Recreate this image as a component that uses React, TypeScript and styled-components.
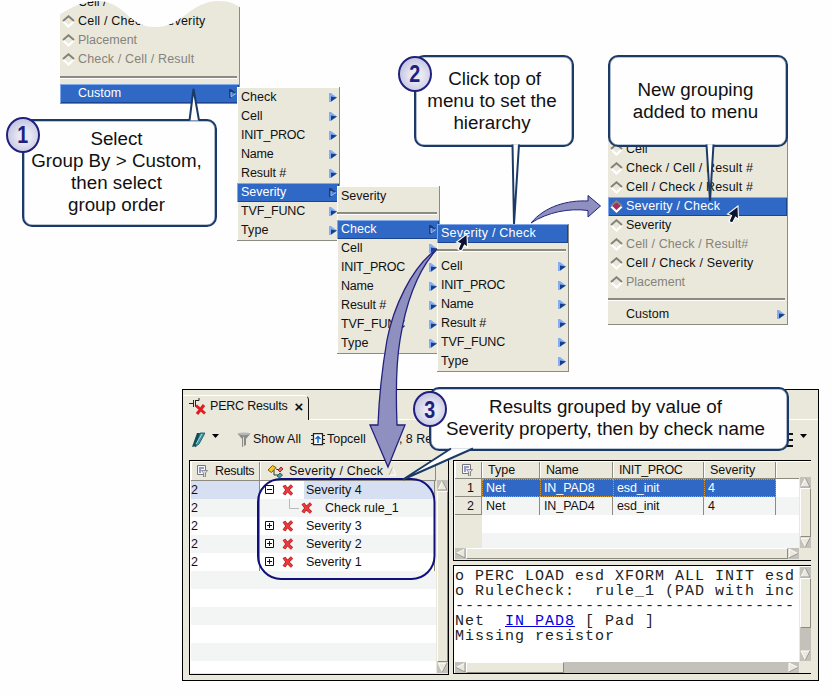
import React from "react";
import styled, { createGlobalStyle, css } from "styled-components";

const Global = createGlobalStyle`
  * { box-sizing: border-box; }
  html, body { margin: 0; background: #fefefe; overflow: hidden; }
`;

const BEIGE = "#eae8db";
const BLUE = "#2f68c5";

const Canvas = styled.main`
  position: relative;
  width: 831px;
  height: 696px;
  overflow: hidden;
  background: #fefefe;
  font: 12.5px/19px "Liberation Sans", Arial, sans-serif;
  color: #111;
  white-space: pre;
`;

/* ---------- menus ---------- */

const MenuBox = styled.ul<{ $x: number; $y: number; $w: number; $flat?: boolean }>`
  position: absolute;
  left: ${(p) => p.$x}px;
  top: ${(p) => p.$y}px;
  width: ${(p) => p.$w}px;
  margin: 0;
  padding: 0;
  list-style: none;
  background: ${BEIGE};
  border: solid #8d8a80;
  border-width: 0 1px 1px 0;
  box-shadow: ${(p) => (p.$flat ? "none" : "inset 1px 1px #fff")};
`;

const MenuRow = styled.li<{ $on?: boolean; $dim?: boolean; $indent: number; $ls: number }>`
  display: flex;
  align-items: center;
  height: 19px;
  padding: 0 2px 0 ${(p) => p.$indent}px;
  letter-spacing: ${(p) => p.$ls}px;
  color: ${(p) => (p.$on ? "#fff" : p.$dim ? "#85837c" : "#111")};
  ${(p) =>
    p.$on &&
    css`
      background: ${BLUE};
      box-shadow: inset 1px 1px #82a8ec, inset -1px -1px #1b458f;
    `}
`;

const MenuText = styled.span`
  flex: 1;
`;

const MenuGap = styled.li<{ $h: number; $line: number }>`
  height: ${(p) => p.$h}px;
  padding: ${(p) => p.$line}px 2px 0 0;
  &::before {
    content: "";
    display: block;
    height: 2px;
    background: #8d8a80;
    border-bottom: 1px solid #fff;
  }
`;

const Space = styled.li<{ $h: number }>`
  height: ${(p) => p.$h}px;
`;

const Diamond = styled.svg`
  width: 13px;
  height: 13px;
  margin: 0 3px 0 1px;
  flex: none;
`;

const Chevron = styled.svg`
  width: 8px;
  height: 9px;
  flex: none;
`;

const RadioMark = ({ on }: { on?: boolean }) => (
  <Diamond viewBox="0 0 13 13">
    {on && <path d="M6.5 2 11 6.5 6.5 11 2 6.5Z" fill="#a82c5e" />}
    <path d="M1.2 6.5 6.5 11.5 11.8 6.5" fill="none" stroke="#fff" strokeWidth="2.2" />
    <path d="M1 6 6.5 1.2 12 6" fill="none" stroke="#85827a" strokeWidth="1.9" />
  </Diamond>
);

const Sub = ({ on }: { on?: boolean }) => (
  <Chevron viewBox="0 0 8 9">
    {on ? (
      <>
        <path d="M0 0h2l5 4-5 5H0Z" fill="#193d7c" />
        <path d="M2 3v5l5-3.5" fill="#4f82d4" stroke="#9abbf5" />
      </>
    ) : (
      <>
        <path d="M0 0h2l6 4.5L2 9H0Z" fill="#86acf2" />
        <path d="M2 3.5 8 4.5 2 8.5Z" fill="#173f86" />
      </>
    )}
  </Chevron>
);

type Item = { t: string; on?: boolean; dim?: boolean; sub?: boolean; mark?: boolean; ls?: number };

const Row = ({ t, on, dim, sub, mark, ls = 0, indent = 4 }: Item & { indent?: number }) => (
  <MenuRow $on={on} $dim={dim} $indent={mark ? 1 : indent} $ls={ls}>
    {mark && <RadioMark on={on} />}
    <MenuText>{t}</MenuText>
    {sub && <Sub on={on} />}
  </MenuRow>
);

const f = (t: string, ls = 0, on = false): Item => ({ t, ls, on, sub: true });
const tail: Item[] = [f("Cell"), f("INIT_PROC", -0.3), f("Name", -0.2), f("Result #", -0.1), f("TVF_FUNC", -0.15), f("Type", 0.15)];

const Wave = styled.svg`
  position: absolute;
  left: 59px;
  top: 0;
  width: 182px;
  height: 30px;
`;

/* ---------- results window ---------- */

const Window = styled.section`
  position: absolute;
  left: 182px;
  top: 389px;
  width: 637px;
  height: 292px;
  display: flex;
  flex-direction: column;
  background: ${BEIGE};
  border: 1px solid #000;
`;

const TabBar = styled.div`
  display: flex;
  align-items: flex-end;
  height: 30px;
  flex: none;
`;

const Tab = styled.div`
  display: flex;
  align-items: center;
  width: 126px;
  height: 25px;
  padding: 0 0 3px 6px;
  border-top: 1px solid #fff;
  border-right: 1px solid #111;
  border-radius: 0 5px 0 0;
  letter-spacing: -0.2px;
  svg { margin-right: 4px; }
  b { margin-left: 7px; font-size: 15px; }
`;

const TabLine = styled.div`
  flex: 1;
  border-bottom: 1px solid #fff;
`;

const Toolbar = styled.div`
  display: flex;
  align-items: center;
  height: 39px;
  flex: none;
  padding: 0 10px 0 9px;
`;

const Tool = styled.div<{ $ml?: number; $gap?: number; $up?: boolean }>`
  display: flex;
  align-items: center;
  gap: ${(p) => p.$gap ?? 2}px;
  margin-left: ${(p) => p.$ml ?? 0}px;
  ${(p) => p.$up && "padding-bottom: 6px;"}
`;

const Grow = styled.div`
  flex: 1;
`;

const Panes = styled.div`
  display: flex;
  gap: 4px;
  padding: 1px 7px 0 6px;
`;

const Pane = styled.div<{ $w: number; $h: number }>`
  display: flex;
  width: ${(p) => p.$w}px;
  height: ${(p) => p.$h}px;
  border: 1px solid #000;
  box-shadow: inset 1px 1px #fff;
  background: ${BEIGE};
  padding: 1px 0 0 1px;
`;

const Stack = styled.div<{ $gap?: number; $w?: number }>`
  display: flex;
  flex-direction: column;
  gap: ${(p) => p.$gap ?? 0}px;
  width: ${(p) => (p.$w ? p.$w + "px" : "auto")};
  overflow: hidden;
`;

const Line = styled.div<{ $h: number; $bg?: string }>`
  display: flex;
  flex: none;
  height: ${(p) => p.$h}px;
  line-height: ${(p) => p.$h}px;
  background: ${(p) => p.$bg ?? "#fff"};
`;

const Head = styled.div<{ $w: number; $pl: number; $ls?: number; $gap?: number }>`
  display: flex;
  align-items: center;
  gap: ${(p) => p.$gap ?? 6}px;
  width: ${(p) => p.$w}px;
  flex: none;
  padding-left: ${(p) => p.$pl}px;
  background: ${BEIGE};
  border-right: 1px solid #8d8a80;
  border-bottom: 1px solid #8d8a80;
  box-shadow: inset 1px 0 #fff;
  letter-spacing: ${(p) => p.$ls ?? 0}px;
`;

const Cell = styled.div<{ $w: number; $pl?: number; $bg?: string; $edge?: boolean; $ls?: number }>`
  display: flex;
  align-items: center;
  width: ${(p) => p.$w}px;
  flex: none;
  padding-left: ${(p) => p.$pl ?? 1}px;
  background: ${(p) => p.$bg ?? "transparent"};
  border-right: ${(p) => (p.$edge ? "1px solid #8d8a80" : "0")};
  letter-spacing: ${(p) => p.$ls ?? 0}px;
`;

const Picked = styled(Cell)`
  background: ${BLUE};
  color: #fff;
  border: 1px dotted #d99a3c;
  border-right-width: ${(p) => (p.$edge ? 1 : 0)}px;
`;

const RowNumber = styled(Cell)`
  background: ${BEIGE};
  justify-content: flex-end;
  padding-right: 7px;
  border-bottom: 1px solid #8d8a80;
`;

const ScrollV = styled.div<{ $mt?: number; $mb?: number }>`
  display: flex;
  flex-direction: column;
  width: 11px;
  flex: none;
  margin: ${(p) => p.$mt ?? 0}px 0 ${(p) => p.$mb ?? 1}px 1px;
  background: #c3c1ba;
`;

const ScrollH = styled.div`
  display: flex;
  height: 11px;
  flex: none;
  background: #c3c1ba;
`;

const Thumb = styled.div<{ $len?: number }>`
  flex: ${(p) => (p.$len ? `0 0 ${p.$len}px` : "1")};
  background: ${BEIGE};
  border: 1px solid;
  border-color: #fff #8d8a80 #8d8a80 #fff;
`;

const ArrowSvg = styled.svg`
  width: 11px;
  height: 11px;
  flex: none;
`;

const shapes = {
  up: ["M5.5 1 10 10H1Z", "M5.5 1 10 10H1"],
  down: ["M1 1h9L5.5 10Z", "M10 1 5.5 10"],
  left: ["M1 5.5 10 1v9Z", "M1 5.5 10 10V1"],
  right: ["M10 5.5 1 1v9Z", "M10 5.5 1 10"],
};
const Knob = ({ d }: { d: keyof typeof shapes }) => (
  <ArrowSvg viewBox="0 0 11 11">
    <path d={shapes[d][0]} fill={BEIGE} stroke="#fff" />
    <path d={shapes[d][1]} fill="none" stroke="#8d8a80" />
  </ArrowSvg>
);

const Report = styled.pre`
  width: 344px;
  height: 95px;
  margin: 0;
  padding: 2px 0 0 0;
  overflow: hidden;
  background: #fff;
  font: 15px/15px "Liberation Mono", monospace;
  letter-spacing: 1px;
  color: #222;
  a { color: #0000e0; text-decoration: underline; }
`;

/* ---------- icons ---------- */

const RedX = () => (
  <svg width="12" height="12" viewBox="0 0 12 12">
    <path d="M2 1.5C4 5 7 8 10 10.5M10 1.5C7 4 4 7 2 10.5" stroke="#a81e22" strokeWidth="3.4" />
    <path d="M2 1.5C4 5 7 8 10 10.5M10 1.5C7 4 4 7 2 10.5" stroke="#ee3a3c" strokeWidth="2.1" />
  </svg>
);

const Expander = ({ open }: { open?: boolean }) => (
  <svg width="10" height="10" viewBox="0 0 10 10">
    <path d={"M.5 .5h8v8h-8ZM2 4.5h5" + (open ? "" : "M4.5 2v5")} fill="#fff" stroke="#111" />
  </svg>
);

const SheetIcon = () => (
  <svg width="12" height="12" viewBox="0 0 12 12">
    <path d="M1.5 .5h8v9h-8Z" fill="#f7f8fb" stroke="#77777b" />
    <path d="M3 3h5M3 5h2M3 7h2" stroke="#2a42a5" />
    <path d="M5.5 5.5h6L9.5 8v4h-2V8Z" fill="#dedede" stroke="#77777b" strokeWidth=".8" />
  </svg>
);

const TreeIcon = () => (
  <svg width="17" height="15" viewBox="0 0 17 15">
    <path d="M7 6v5h4M9 5l3 1" fill="none" stroke="#333" />
    <path d="M1 6 5.5 1.500 9 3.500 4.500 8.500Z" fill="#f4c52c" stroke="#7b5d08" />
    <path d="m11 6 3-3 2 2-3 3Z" fill="#ef6262" stroke="#a52222" />
    <path d="m10 12 3-3 2.500 2-3 3Z" fill="#45a698" stroke="#17685f" />
  </svg>
);

const PercIcon = () => (
  <svg width="17" height="17" viewBox="0 0 17 17">
    <path d="M0 5.5h4M4.5 2v7M6.5 2v7M7 2.5h3V0M7 8.5h3" fill="none" stroke="#222" />
    <path d="M7 7.5 16 15.500M15 7 8 16" stroke="#df1d21" strokeWidth="3" />
  </svg>
);

const PenIcon = () => (
  <svg width="13" height="16" viewBox="0 0 13 16">
    <path d="M5 1h3L4 14l-4 1Z" fill="#124d57" />
    <path d="M8 1h5L7 12l-4 3Z" fill="#3f98a2" stroke="#174e59" strokeWidth=".8" />
    <path d="M10 2 4 12" stroke="#9cdce0" />
  </svg>
);

const Funnel = () => (
  <svg width="14" height="15" viewBox="0 0 14 15">
    <path d="M.5 1.5h13L9 7v6l-4 2V7Z" fill="#8b8b89" />
    <ellipse cx="7" cy="1.8" rx="6" ry="1.4" fill="#b7b7b5" />
    <path d="M6.5 5v9" stroke="#ddd" />
  </svg>
);

const ChipIcon = () => (
  <svg width="14" height="13" viewBox="0 0 14 13">
    <path d="M0 2.5h14M0 6.5h14M0 10.5h14" stroke="#222" />
    <path d="M2.5 .7h9v11h-9Z" fill="#fff" stroke="#222" strokeWidth="1.3" />
    <path d="M7 10V3M4.5 6 7 3.5 9.5 6" fill="none" stroke="#1268d4" strokeWidth="1.5" />
  </svg>
);

const DropIcon = () => (
  <svg width="8" height="5" viewBox="0 0 8 5">
    <path d="M0 0h7L3.5 4Z" fill="#000" />
  </svg>
);

const SortIcon = () => (
  <svg width="9" height="9" viewBox="0 0 9 9">
    <path d="M4.500 .5 8 8H1Z" fill="none" stroke="#fff" />
    <path d="M4.500 .5 1 8" stroke="#aaa79d" />
  </svg>
);

/* ---------- results data ---------- */

const TreeRow = styled.div<{ $child?: boolean; $on?: boolean }>`
  display: flex;
  align-items: center;
  width: 175px;
  padding-left: ${(p) => (p.$child ? 28 : 5)}px;
  border-right: 1px solid #8d8a80;
  background: ${(p) => (p.$on ? "linear-gradient(90deg, #fff 44px, transparent 44px)" : "none")};
  > svg:first-child { margin-right: ${(p) => (p.$child ? 2 : 7)}px; }
  > span { margin-left: 12px; }
`;

const tree = [
  { t: "Severity 4", open: true },
  { t: "Check rule_1", child: true },
  { t: "Severity 3" },
  { t: "Severity 2" },
  { t: "Severity 1" },
];

const Tree = () => (
  <Pane $w={260} $h={215}>
    <Stack $w={245}>
      <Line $h={19} $bg={BEIGE}>
        <Head $w={69} $pl={5} $gap={7} $ls={-0.35}>
          <SheetIcon />
          Results
        </Head>
        <Head $w={176} $pl={7} $gap={5} $ls={0.2}>
          <TreeIcon />
          Severity / Check
          <SortIcon />
        </Head>
      </Line>
      {tree.map((r, i) => (
        <Line key={r.t} $h={18} $bg={i === 0 ? "#d6e0f2" : i % 2 ? "#f3f5f4" : "#fff"}>
          <Cell $w={69} $pl={0} $edge>
            2
          </Cell>
          <TreeRow $child={r.child} $on={r.open}>
            {r.child ? (
              <svg width="11" height="18" viewBox="0 0 11 18">
                <path d="M1.5 0v9.5H11" fill="none" stroke="#b9b9b9" />
              </svg>
            ) : (
              <Expander open={r.open} />
            )}
            <RedX />
            <span>{r.t}</span>
          </TreeRow>
        </Line>
      ))}
      {[0, 1, 2, 3, 4, 5].map((i) => (
        <Line key={i} $h={i === 5 ? 12 : 18} $bg={i % 2 ? "#fff" : "#f3f5f4"} />
      ))}
    </Stack>
    <ScrollV $mt={18}>
      <Knob d="up" />
      <Thumb />
      <Knob d="down" />
    </ScrollV>
  </Pane>
);

const Grid = () => (
  <Pane $w={359} $h={101}>
    <Stack $w={344}>
      <Line $h={17} $bg={BEIGE}>
        <Head $w={27} $pl={6}>
          <SheetIcon />
        </Head>
        <Head $w={58} $pl={6}>Type</Head>
        <Head $w={73} $pl={6} $ls={-0.2}>Name</Head>
        <Head $w={91} $pl={6} $ls={-0.35}>INIT_PROC</Head>
        <Head $w={72} $pl={6}>Severity</Head>
        <Head $w={24} $pl={0} />
      </Line>
      <Line $h={18}>
        <RowNumber $w={27} $edge>1</RowNumber>
        <Picked $w={58} $pl={3}>Net</Picked>
        <Picked $w={73} $pl={3} $ls={-0.1}>IN_PAD8</Picked>
        <Picked $w={91} $pl={3} $ls={-0.1}>esd_init</Picked>
        <Picked $w={72} $pl={3} $edge>4</Picked>
      </Line>
      <Line $h={18} $bg="#f3f5f4">
        <RowNumber $w={27} $edge>2</RowNumber>
        <Cell $w={58} $pl={4} $edge>Net</Cell>
        <Cell $w={73} $pl={4} $ls={-0.1} $edge>IN_PAD4</Cell>
        <Cell $w={91} $pl={4} $ls={-0.1} $edge>esd_init</Cell>
        <Cell $w={72} $pl={4} $edge>4</Cell>
      </Line>
      <Line $h={18}>
        <Cell $w={27} $bg={BEIGE} />
      </Line>
      <Line $h={15} $bg="#f3f5f4">
        <Cell $w={27} $bg={BEIGE} />
      </Line>
      <ScrollH>
        <Knob d="left" />
        <Thumb />
        <Knob d="right" />
      </ScrollH>
    </Stack>
    <ScrollV $mt={15} $mb={12}>
      <Knob d="up" />
      <Thumb />
      <Knob d="down" />
    </ScrollV>
  </Pane>
);

const Details = () => (
  <Pane $w={359} $h={109}>
    <Stack $w={344}>
      <Report>
        {"o PERC LOAD esd XFORM ALL INIT esd\no RuleCheck:  rule_1 (PAD with inc\n----------------------------------\nNet  "}
        <a>IN_PAD8</a>
        {" [ Pad ]\nMissing resistor"}
      </Report>
      <ScrollH>
        <Knob d="left" />
        <Thumb $len={98} />
        <Grow />
        <Knob d="right" />
      </ScrollH>
    </Stack>
    <ScrollV $mb={12}>
      <Knob d="up" />
      <Thumb $len={50} />
      <Grow />
      <Knob d="down" />
    </ScrollV>
  </Pane>
);

/* ---------- annotations ---------- */

const Bubble = styled.div<{ $x: number; $y: number; $w: number; $h: number; $pt: number; $pr?: number }>`
  position: absolute;
  left: ${(p) => p.$x}px;
  top: ${(p) => p.$y}px;
  width: ${(p) => p.$w}px;
  height: ${(p) => p.$h}px;
  padding: ${(p) => p.$pt}px ${(p) => p.$pr ?? 0}px 0 0;
  border: 2px solid #1b3a66;
  border-radius: 10px;
  background: #fefefe;
  font-size: 18.8px;
  line-height: 22px;
  text-align: center;
  box-shadow: inset 0 0 0 0.6px #7d90ad;
`;

const Badge = styled.div<{ $x: number; $y: number }>`
  position: absolute;
  left: ${(p) => p.$x}px;
  top: ${(p) => p.$y}px;
  width: 34px;
  height: 36px;
  display: flex;
  align-items: center;
  justify-content: center;
  border: 2px solid #20207e;
  border-radius: 50%;
  background: radial-gradient(circle at 55% 55%, #e8e8f3 25%, #c3c4e0 75%);
  color: #20207e;
  font-size: 24px;
  font-weight: bold;
  span { transform: scaleX(0.82); }
`;

const Overlay = styled.svg`
  position: absolute;
  inset: 0;
  width: 831px;
  height: 696px;
  pointer-events: none;
`;

const Cursor = ({ x, y }: { x: number; y: number }) => (
  <path
    transform={`translate(${x} ${y})`}
    d="M0 0-10.5 8-6.5 9.5-9 15.5-5.5 17-2.5 11 .5 13.5Z"
    fill="#0d1330"
    stroke="#fff"
    strokeWidth="1.1"
  />
);

export default function App() {
  return (
    <Canvas>
      <Global />

      <MenuBox $x={60} $y={-7} $w={180} $flat>
        <Row mark t="Cell / " />
        <Row mark t="Cell / Check / Severity" ls={0.2} />
        <Row mark dim t="Placement" />
        <Row mark dim t="Check / Cell / Result" ls={0.15} />
        <MenuGap $h={15} $line={7} />
        <Row on sub t="Custom" indent={18} />
      </MenuBox>
      <Wave viewBox="59 0 182 30">
        <path d="M59-1V15C72 7 83 1 97 1 126 1 127 27 155 27 183 27 190 1 219 1 230 1 235 4 241 8V-1Z" fill="#fefefe" />
      </Wave>

      <MenuBox $x={237} $y={87} $w={103}>
        <Space $h={1} />
        {[f("Check"), ...tail.slice(0, 4), f("Severity", 0, true), ...tail.slice(4)].map((r) => (
          <Row key={r.t} {...r} />
        ))}
      </MenuBox>

      <MenuBox $x={337} $y={186} $w={103}>
        <Space $h={1} />
        <Row t="Severity" />
        <MenuGap $h={14} $line={6} />
        <Row {...f("Check", 0, true)} />
        {tail.map((r) => (
          <Row key={r.t} {...r} />
        ))}
      </MenuBox>

      <Window>
        <TabBar>
          <Tab>
            <PercIcon />
            PERC Results<b>×</b>
          </Tab>
          <TabLine />
        </TabBar>
        <Toolbar>
          <Tool $gap={7}>
            <PenIcon />
            <Tool $up>
              <DropIcon />
            </Tool>
          </Tool>
          <Tool $ml={17}>
            <Funnel />
            Show All
          </Tool>
          <Tool $ml={10}>
            <ChipIcon />
            Topcell
          </Tool>
          <Tool $ml={33}>, 8 Results</Tool>
          <Grow />
          <svg width="20" height="16" viewBox="0 0 20 16">
            <path d="M0 2h20M0 8h20M0 14h20" stroke="#111" strokeWidth="2" />
          </svg>
          <Tool $ml={7} $up>
            <DropIcon />
          </Tool>
        </Toolbar>
        <Panes>
          <Tree />
          <Stack $gap={4}>
            <Grid />
            <Details />
          </Stack>
        </Panes>
      </Window>

      <MenuBox $x={437} $y={224} $w={132}>
        <Row on t="Severity / Check" ls={0.25} />
        <MenuGap $h={14} $line={6} />
        {tail.map((r) => (
          <Row key={r.t} {...r} />
        ))}
      </MenuBox>

      <MenuBox $x={608} $y={83} $w={180} $flat>
        <Space $h={57} />
        <Row mark t="Cell" />
        <Row mark t="Check / Cell / Result #" ls={0.15} />
        <Row mark t="Cell / Check / Result #" ls={0.15} />
        <Row mark on t="Severity / Check" ls={0.2} />
        <Row mark t="Severity" />
        <Row mark dim t="Cell / Check / Result#" ls={0.1} />
        <Row mark t="Cell / Check / Severity" ls={0.2} />
        <Row mark dim t="Placement" />
        <MenuGap $h={13} $line={6} />
        <Row sub t="Custom" indent={18} />
      </MenuBox>

      <Overlay viewBox="0 0 831 696">
        <rect x="258" y="479" width="176.5" height="100" rx="23" fill="none" stroke="#10107c" strokeWidth="2" />
        <Cursor x={467} y={234} />
        <Cursor x={738} y={206} />
        <g fill="#8f8fc0" stroke="#22227e" strokeWidth="1.3">
          <path d="M437 249C411 267 393 309 387 340 382 369 379 398 378 425H370L388 467 405 425H397C396 400 396 364 400 340 406 302 418 270 437 249Z" />
          <path d="M531 223C545 206 568 200 588 201V195.5L600.5 206 588 217V210.5C569 208 548 212 531 223Z" strokeWidth="1" />
        </g>
      </Overlay>

      <Bubble $x={21.5} $y={118.5} $w={195} $h={108} $pt={7} $pr={5}>
        {"Select\nGroup By > Custom,\nthen select\ngroup order"}
      </Bubble>
      <Bubble $x={414} $y={54.5} $w={160} $h={92} $pt={11} $pr={4}>
        {" Click top of\nmenu to set the\nhierarchy"}
      </Bubble>
      <Bubble $x={607.5} $y={54.5} $w={180} $h={92} $pt={22} $pr={4}>
        {"New grouping\nadded to menu"}
      </Bubble>
      <Bubble $x={428.5} $y={387} $w={360} $h={63.5} $pt={7} $pr={6}>
        {"Results grouped by value of\nSeverity property, then by check name"}
      </Bubble>

      <Overlay viewBox="0 0 831 696">
        <g fill="#fefefe" stroke="#1b3a66" strokeWidth="2">
          <path d="M189.5 120.5 193.5 89 199 120.5" />
          <path d="M512.5 144.5 514 224 519 144.5" />
          <path d="M706.5 144.5 710 201 713.5 144.5" />
          <path d="M451 448.500 403 479.5 473 448.500" />
        </g>
      </Overlay>

      <Badge $x={6} $y={116.5}><span>1</span></Badge>
      <Badge $x={398} $y={55.5}><span>2</span></Badge>
      <Badge $x={413} $y={391}><span>3</span></Badge>
    </Canvas>
  );
}
